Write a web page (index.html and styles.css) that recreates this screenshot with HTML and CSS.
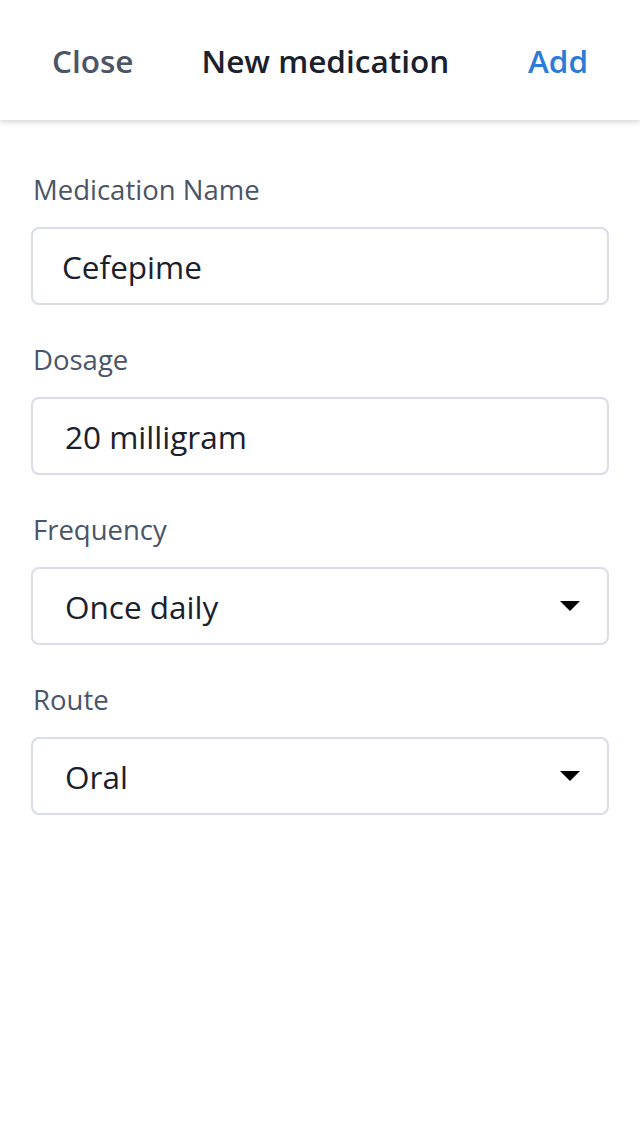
FILE: index.html
```html
<!DOCTYPE html>
<html>
<head>
<meta charset="utf-8">
<link rel="stylesheet" href="styles.css">
</head>
<body>
<header class="topbar">
  <span class="btn btn-close">Close</span>
  <span class="title">New medication</span>
  <span class="btn btn-add">Add</span>
</header>
<main class="form">
  <div class="field">
    <label class="label">Medication Name</label>
    <div class="input input-name">Cefepime</div>
  </div>
  <div class="field">
    <label class="label">Dosage</label>
    <div class="input">20 milligram</div>
  </div>
  <div class="field">
    <label class="label">Frequency</label>
    <div class="input select"><span>Once daily</span><span class="caret"></span></div>
  </div>
  <div class="field">
    <label class="label">Route</label>
    <div class="input select"><span>Oral</span><span class="caret"></span></div>
  </div>
</main>
</body>
</html>
```

FILE: styles.css
```css
* { box-sizing: border-box; }
html, body { margin: 0; padding: 0; background: #fff; }
body {
  font-family: "Open Sans", "Noto Sans", sans-serif;
  width: 640px;
  height: 1136px;
  overflow: hidden;
}
.topbar {
  height: 120px;
  display: flex;
  align-items: center;
  padding: 0 52px 0 52px;
  background: #fff;
  box-shadow: 0 2px 6px rgba(0, 0, 0, 0.18);
  font-size: 31.5px;
  font-weight: 600;
}
.btn-close { color: #4a5568; }
.title { color: #1a202c; margin-left: 68px; }
.btn-add { color: #2b7bd9; margin-left: auto; }
.form {
  padding: 51px 31px 0 31px;
  display: flex;
  flex-direction: column;
  gap: 36px;
}
.field {
  display: flex;
  flex-direction: column;
  gap: 18px;
}
.label {
  font-size: 27.5px;
  color: #4a5568;
  padding-left: 2px;
  line-height: 38px;
}
.input {
  height: 78px;
  border: 2px solid #dadce8;
  border-radius: 8px;
  padding: 0 27px 0 32px;
  display: flex;
  align-items: center;
  font-size: 31.5px;
  color: #1a202c;
}
.input-name { padding-left: 29px; }
.select { justify-content: space-between; }
.caret {
  width: 0;
  height: 0;
  border-left: 10px solid transparent;
  border-right: 10px solid transparent;
  border-top: 10px solid #000;
}
```
